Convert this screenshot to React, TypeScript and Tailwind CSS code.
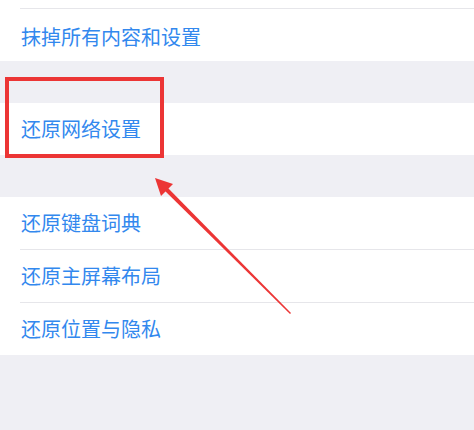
import React from "react";

const font = { fontFamily: '"Noto Sans CJK SC", "Noto Sans", sans-serif' };

function Row({ label, last }: { label: string; last?: boolean }) {
  return (
    <div className="bg-white">
      <div className="flex h-[52px] items-center pl-[21px] text-[20px] leading-none text-[#3288ee]">
        {label}
      </div>
      {!last && <div className="ml-5 h-px bg-[#e6e6ea]" />}
    </div>
  );
}

export default function App() {
  return (
    <div className="relative h-[430px] w-[474px] overflow-hidden bg-[#efeff4]" style={font}>
      {/* top group */}
      <div className="bg-white">
        <div className="h-[8px]" />
        <div className="ml-5 h-px bg-[#e6e6ea]" />
        <div className="flex h-[52px] items-center pl-[21px] pt-[3px] text-[20px] leading-none text-[#3288ee]">
          抹掉所有内容和设置
        </div>
      </div>

      <div className="h-[42px]" />
      <Row label="还原网络设置" last />
      <div className="h-[42px]" />

      <div>
        <Row label="还原键盘词典" />
        <Row label="还原主屏幕布局" />
        <Row label="还原位置与隐私" last />
      </div>

      {/* highlight box */}
      <div className="absolute left-[5px] top-[77px] h-[81px] w-[159px] border-4 border-[#ec3535]" />

      {/* arrow */}
      <svg className="absolute left-0 top-0" width="474" height="430" viewBox="0 0 474 430">
        <polygon points="163,189 166,186 291,313 290,314" fill="#ec3535" />
        <polygon points="155,178 173,184 161,196" fill="#ec3535" />
      </svg>
    </div>
  );
}
